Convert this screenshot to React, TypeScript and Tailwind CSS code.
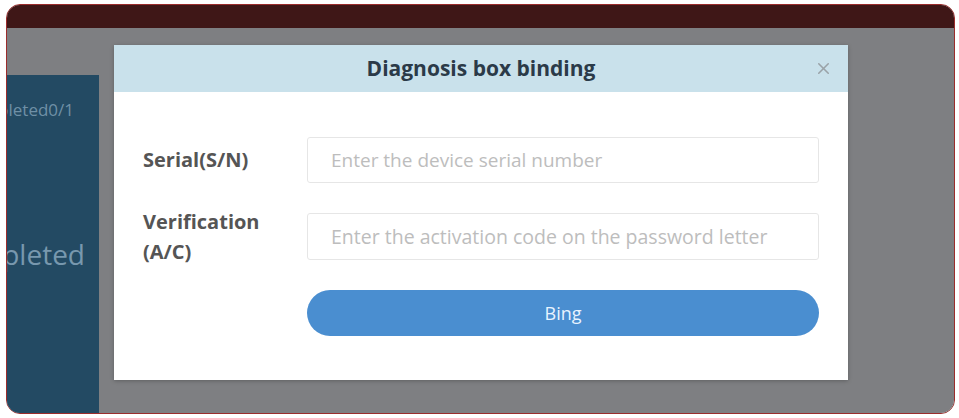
import { X } from "lucide-react";

const FONT = { fontFamily: '"Open Sans", "Noto Sans", sans-serif' };

export default function App() {
  return (
    <div className="w-[959px] h-[418px] bg-white pt-[4px] pl-[6px]" style={FONT}>
      <div className="w-[949px] h-[410px] rounded-[14px] border border-[#9b2c2c] overflow-hidden flex flex-col">
        {/* barra superior */}
        <div className="h-[23px] bg-[#3f1717] shrink-0" />

        <div className="relative flex-1 bg-[#7e7f82] flex">
          {/* painel lateral */}
          <div className="mt-[47px] w-[92px] bg-[#234a63] overflow-hidden flex flex-col">
            <div className="flex justify-end pr-[25px] pt-[22px] whitespace-nowrap text-[17px] text-[#6f90a6]">
              Completed0/1
            </div>
            <div className="flex justify-end pr-[14px] mt-[110px] whitespace-nowrap text-[28px] text-[#7898ae]">
              Completed
            </div>
          </div>

          {/* modal */}
          <div className="absolute left-[107px] top-[17px] w-[734px] h-[335px] bg-white shadow-[0_1px_4px_rgba(0,0,0,0.25)] flex flex-col">
            <div className="relative h-[47px] bg-[#c9e1eb] flex items-center justify-center">
              <span className="text-[21px] font-bold text-[#2b3a48]">Diagnosis box binding</span>
              <X className="absolute right-[15px] top-[14px] w-[19px] h-[19px] text-[#9aa3a8]" strokeWidth={2} />
            </div>

            <div className="flex flex-col pl-[29px] pr-[29px] pt-[45px]">
              <div className="flex items-center">
                <label className="w-[164px] text-[20px] font-bold text-[#555]">Serial(S/N)</label>
                <input
                  type="text"
                  placeholder="Enter the device serial number"
                  className="flex-1 h-[46px] border border-[#e6e6e6] rounded-[3px] px-[23px] text-[19px] text-[#333] placeholder-[#bdbdbd] outline-none"
                />
              </div>

              <div className="flex items-center mt-[30px]">
                <label className="w-[164px] -my-[7px] text-[20px] font-bold text-[#555] leading-[30px]">
                  Verification
                  <br />
                  (A/C)
                </label>
                <input
                  type="text"
                  placeholder="Enter the activation code on the password letter"
                  className="flex-1 h-[47px] border border-[#e6e6e6] rounded-[3px] px-[23px] text-[19.5px] text-[#333] placeholder-[#bdbdbd] outline-none"
                />
              </div>

              <div className="flex mt-[30px]">
                <div className="w-[164px]" />
                <button className="flex-1 h-[46px] rounded-full bg-[#4a8ed0] text-[18px] text-[#e8f3ff]">
                  Bing
                </button>
              </div>
            </div>
          </div>
        </div>
      </div>
    </div>
  );
}
